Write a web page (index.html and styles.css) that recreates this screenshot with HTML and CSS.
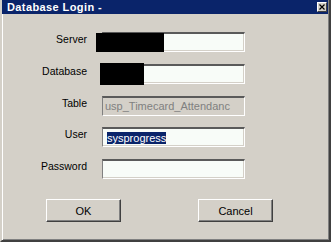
FILE: index.html
```html
<!DOCTYPE html>
<html lang="en">
<head>
    <meta charset="UTF-8">
    <title>Database Login</title>
    <link rel="stylesheet" href="styles.css">
</head>
<body>

    <div class="window">
        <div class="titlebar">
            <span class="title">Database Login -</span>
            <span class="close-btn">
                <svg width="6" height="6" viewBox="0 0 6 6">
                    <path d="M0.5 0.5l5 5M5.5 0.5l-5 5" stroke="#000" stroke-width="1.2" fill="none"/>
                </svg>
            </span>
        </div>

        <div class="content">
            <div class="login-form">
                <div class="field-label">Server</div>
                <div class="field">
                    <div class="text-input"></div>
                    <span class="redact redact-server"></span>
                </div>

                <div class="field-label">Database</div>
                <div class="field">
                    <div class="text-input"></div>
                    <span class="redact redact-db"></span>
                </div>

                <div class="field-label">Table</div>
                <div class="field">
                    <div class="text-input disabled">usp_Timecard_Attendanc</div>
                </div>

                <div class="field-label">User</div>
                <div class="field">
                    <div class="text-input"><span class="selected">sysprogress</span></div>
                </div>

                <div class="field-label">Password</div>
                <div class="field">
                    <div class="text-input"></div>
                </div>
            </div>

            <div class="buttons">
                <button class="btn">OK</button>
                <button class="btn">Cancel</button>
            </div>
        </div>
    </div>

</body>
</html>
```

FILE: styles.css
```css
body {
    margin: 0;
    padding: 0;
    background: #d4d0c8;
    font-family: 'Liberation Sans', Arial, sans-serif;
}

.window {
    width: 331px;
    height: 242px;
    box-sizing: border-box;
    background: #d4d0c8;
    border-left: 2px solid #d4d0c8;
    border-right: 2px solid #404040;
    border-bottom: 2px solid #404040;
    box-shadow: inset -1px -1px 0 #808080, inset 1px 0 0 #fff;
    display: flex;
    flex-direction: column;
}

.titlebar {
    height: 14px;
    margin-right: 1px;
    background: #0a246a;
    display: flex;
    justify-content: space-between;
    align-items: center;
    padding: 0 1px 0 5px;
}

.title {
    color: white;
    font-weight: bold;
    font-size: 11px;
    letter-spacing: 0.4px;
    line-height: 14px;
}

.close-btn {
    width: 10px;
    height: 10px;
    box-sizing: border-box;
    background: #d4d0c8;
    border-top: 1px solid #fff;
    border-left: 1px solid #fff;
    border-right: 1px solid #404040;
    border-bottom: 1px solid #404040;
    display: flex;
    justify-content: center;
    align-items: center;
}

.close-btn svg {
    display: block;
}

.content {
    flex: 1;
    box-shadow: inset 1px 0 0 #fff;
}

.login-form {
    margin-top: 18px;
    display: grid;
    grid-template-columns: 85px 143px;
    column-gap: 15px;
    row-gap: 11.75px;
}

.field-label {
    text-align: right;
    font-size: 10.5px;
    line-height: 14px;
    color: #000;
}

.field {
    position: relative;
}

.text-input {
    height: 20px;
    box-sizing: border-box;
    background: #f8fcf8;
    border-top: 2px solid #5a5a5a;
    border-left: 1px solid #808080;
    border-right: 1px solid #fff;
    border-bottom: 1px solid #fff;
    box-shadow: inset -1px -1px 0 #d4d0c8;
    padding: 0 3px;
    font-size: 11px;
    line-height: 16px;
    color: #000;
    white-space: nowrap;
    overflow: hidden;
}

.text-input.disabled {
    background: #d4d0c8;
    color: #808080;
    padding-left: 2px;
}

.selected {
    display: inline-block;
    margin-left: 1px;
    background: #0a246a;
    color: white;
    line-height: 12px;
    vertical-align: middle;
}

.redact {
    position: absolute;
    background: #000;
}

.redact-server {
    left: -6px;
    top: 1px;
    width: 68px;
    height: 19px;
}

.redact-db {
    left: -2px;
    top: -1px;
    width: 44px;
    height: 22px;
}

.buttons {
    margin-top: 20px;
    padding-left: 44px;
    display: flex;
    gap: 77px;
}

.btn {
    width: 75px;
    height: 23px;
    box-sizing: border-box;
    background: #d4d0c8;
    border-top: 1px solid #fff;
    border-left: 1px solid #fff;
    border-right: 1px solid #404040;
    border-bottom: 1px solid #404040;
    box-shadow: inset -1px -1px 0 #808080;
    font-family: 'Liberation Sans', Arial, sans-serif;
    font-size: 11px;
    color: #000;
    padding: 0;
}
```
